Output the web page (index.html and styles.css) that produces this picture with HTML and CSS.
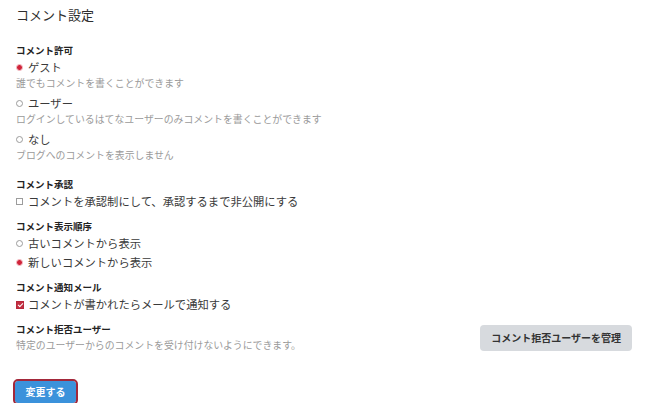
FILE: index.html
```html
<!DOCTYPE html>
<html lang="ja">
<head>
    <meta charset="UTF-8">
    <title>コメント設定</title>
    <link rel="stylesheet" href="styles.css">
</head>
<body>

    <form class="settings" id="comment-settings">
        <h1 class="settings-title">コメント設定</h1>

        <!-- コメント許可 -->
        <div class="section">
            <div class="section-label">コメント許可</div>
            <div class="choices with-desc">
                <div class="choice-group">
                    <label class="choice"><input type="radio" name="allow" value="guest" checked>ゲスト</label>
                    <p class="choice-desc">誰でもコメントを書くことができます</p>
                </div>
                <div class="choice-group">
                    <label class="choice"><input type="radio" name="allow" value="user">ユーザー</label>
                    <p class="choice-desc">ログインしているはてなユーザーのみコメントを書くことができます</p>
                </div>
                <div class="choice-group">
                    <label class="choice"><input type="radio" name="allow" value="none">なし</label>
                    <p class="choice-desc">ブログへのコメントを表示しません</p>
                </div>
            </div>
        </div>

        <!-- コメント承認 -->
        <div class="section">
            <div class="section-label">コメント承認</div>
            <div class="choices">
                <label class="choice"><input type="checkbox" name="approval">コメントを承認制にして、承認するまで非公開にする</label>
            </div>
        </div>

        <!-- コメント表示順序 -->
        <div class="section">
            <div class="section-label">コメント表示順序</div>
            <div class="choices">
                <label class="choice"><input type="radio" name="order" value="asc">古いコメントから表示</label>
                <label class="choice"><input type="radio" name="order" value="desc" checked>新しいコメントから表示</label>
            </div>
        </div>

        <!-- コメント通知メール -->
        <div class="section">
            <div class="section-label">コメント通知メール</div>
            <div class="choices">
                <label class="choice"><input type="checkbox" name="notify" checked>コメントが書かれたらメールで通知する</label>
            </div>
        </div>

        <!-- コメント拒否ユーザー -->
        <div class="section section-row">
            <div>
                <div class="section-label">コメント拒否ユーザー</div>
                <p class="choice-desc">特定のユーザーからのコメントを受け付けないようにできます。</p>
            </div>
            <button type="button" class="btn-sub">コメント拒否ユーザーを管理</button>
        </div>

        <div class="actions">
            <button type="submit" class="btn-submit">変更する</button>
        </div>
    </form>

</body>
</html>
```

FILE: styles.css
```css
:root {
    --text: #3a3a3a;
    --label: #222;
    --muted: #9a9a9a;
    --accent: #d0243a;
    --blue: #3b92db;
    --focus: #a3283a;
    --gray-btn: #d7dade;
}

* {
    margin: 0;
    padding: 0;
    box-sizing: border-box;
}

body {
    font-family: "Noto Sans CJK JP", "Noto Sans", sans-serif;
    background: #fff;
    color: var(--text);
}

.settings {
    padding: 5px 18px 0 16px;
}

.settings-title {
    font-size: 13px;
    font-weight: 400;
    line-height: 20px;
    color: #2e2e2e;
    margin-bottom: 19px;
}

.section + .section {
    margin-top: 10px;
}

.section-label {
    font-size: 9.5px;
    font-weight: 700;
    line-height: 13px;
    color: var(--label);
    margin-bottom: 2px;
}

.choices {
    display: flex;
    flex-direction: column;
    gap: 2px;
}

.choices.with-desc {
    gap: 5px;
    padding-bottom: 6px;
}

.choice {
    display: flex;
    align-items: center;
    font-size: 11.3px;
    line-height: 17px;
    color: var(--text);
}

.choice-desc {
    font-size: 9.9px;
    line-height: 14px;
    color: var(--muted);
}

/* radio / checkbox */
.choice input {
    appearance: none;
    -webkit-appearance: none;
    width: 7px;
    height: 7px;
    margin: 0 5px 0 0;
    border: 1px solid #9c9c9c;
    background: #fff;
    flex-shrink: 0;
}

.choice input[type="radio"] {
    border-radius: 50%;
}

.choice input[type="radio"]:checked {
    border-color: #eea3ad;
    background: radial-gradient(circle, var(--accent) 0 2.2px, #f3c4ca 2.6px);
}

.choice input[type="checkbox"]:checked {
    width: 8px;
    height: 8px;
    margin-right: 4px;
    border-color: #b8293b;
    background: #c22f41;
    position: relative;
}

.choice input[type="checkbox"]:checked::after {
    content: "";
    position: absolute;
    left: 2px;
    top: 0;
    width: 2px;
    height: 4px;
    border: solid #fff;
    border-width: 0 1px 1px 0;
    transform: rotate(45deg);
}

.section-row {
    display: flex;
    justify-content: space-between;
    align-items: center;
}

.btn-sub {
    font-family: inherit;
    font-size: 10px;
    font-weight: 700;
    line-height: 26px;
    height: 26px;
    padding: 0 11px;
    border: none;
    border-radius: 4px;
    background: var(--gray-btn);
    color: #333;
    cursor: pointer;
}

.actions {
    margin-top: 25px;
}

.btn-submit {
    font-family: inherit;
    font-size: 10px;
    font-weight: 700;
    height: 22px;
    line-height: 22px;
    width: 61px;
    margin-left: -1px;
    border: none;
    border-radius: 3px;
    background: var(--blue);
    color: #fff;
    outline: 2px solid var(--focus);
    cursor: pointer;
}
```
